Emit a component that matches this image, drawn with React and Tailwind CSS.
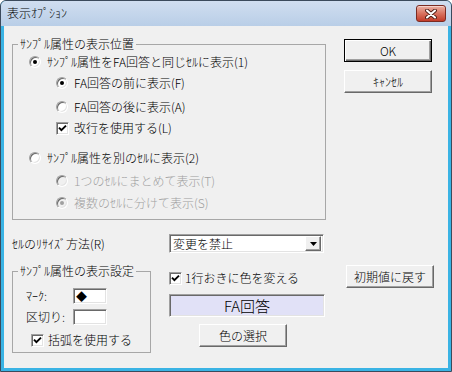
import React from 'react';

// classic sunken 3D edge (edit boxes, combo, check/radio)
const sunken =
  'border border-t-[#a0a0a0] border-l-[#a0a0a0] border-r-white border-b-white shadow-[inset_1px_1px_0_#696969,inset_-1px_-1px_0_#e3e3e3]';

const Radio = ({ checked, disabled }) => (
  <span
    className={`flex h-[12px] w-[12px] shrink-0 items-center justify-center rounded-full ${sunken} ${
      disabled ? 'bg-[#f0f0f0]' : 'bg-white'
    }`}
  >
    {checked && (
      <span className={`h-[4px] w-[4px] rounded-full ${disabled ? 'bg-[#a0a0a0]' : 'bg-black'}`} />
    )}
  </span>
);

const Check = ({ checked }) => (
  <span className={`flex h-[13px] w-[13px] shrink-0 items-center justify-center bg-white ${sunken}`}>
    {checked && (
      <svg width="9" height="9" viewBox="0 0 9 9">
        <path d="M1 3.6 L3.4 6.2 L8 1.6" fill="none" stroke="#000" strokeWidth="1.9" />
      </svg>
    )}
  </span>
);

const Btn = ({ children, def, className = '' }) => (
  <div
    className={`flex h-[23px] w-[88px] shrink-0 items-center justify-center bg-[#f0f0f0] leading-[16px] ${
      def
        ? 'border border-black shadow-[inset_1px_1px_0_#fff,inset_-1px_-1px_0_#696969,inset_-2px_-2px_0_#a0a0a0]'
        : 'border border-t-white border-l-white border-r-[#696969] border-b-[#696969] shadow-[inset_-1px_-1px_0_#a0a0a0]'
    } ${className}`}
  >
    {children}
  </div>
);

const Row = ({ className = '', children }) => (
  <div className={`flex h-[16px] items-center leading-[16px] ${className}`}>{children}</div>
);

const Legend = ({ children }) => (
  <span className="absolute left-[5px] top-[-9px] bg-[#f0f0f0] px-[2px] leading-[16px]">{children}</span>
);

const CloseBtn = () => (
  <div className="flex h-[17px] w-[30px] items-center justify-center rounded-[3px] border border-[#7b2b22] bg-linear-to-b from-[#eab0a4] via-[#d9725f] to-[#c23a28] shadow-[inset_0_1px_0_#f6d2ca]">
    <svg width="14" height="10" viewBox="0 0 14 10">
      <path d="M3 1.5 L11 8.5 M11 1.5 L3 8.5" stroke="#4a1a12" strokeWidth="3.8" strokeLinecap="round" />
      <path d="M3 1.5 L11 8.5 M11 1.5 L3 8.5" stroke="#fff" strokeWidth="2.1" strokeLinecap="round" />
    </svg>
  </div>
);

export default function App() {
  return (
    <div className="h-[372px] w-[452px] overflow-hidden font-['Noto_Sans_CJK_JP',sans-serif] text-[12px] font-light text-black">
      <div className="flex h-full w-full flex-col rounded-t-[6px] border border-[#3b4a5c] bg-[#3ab3e4]">
        {/* title bar */}
        <div className="flex h-[25px] shrink-0 items-start justify-between rounded-t-[5px] bg-linear-to-b from-[#d0def0] to-[#b9cee7] pl-[6px] pr-[5px] pt-[4px]">
          <span className="leading-[16px]">表示ｵﾌﾟｼｮﾝ</span>
          <CloseBtn />
        </div>

        {/* client */}
        <div className="mx-[3px] mb-[3px] flex-1 bg-[#f0f0f0] pl-[8px] pt-[18px]">
          <div className="flex items-start">
            <div className="relative h-[176px] w-[314px] shrink-0 border border-[#a7a7a7] pt-[9px]">
              <Legend>ｻﾝﾌﾟﾙ属性の表示位置</Legend>
              <Row className="gap-[6px] pl-[16px]">
                <Radio checked />
                <span>ｻﾝﾌﾟﾙ属性をFA回答と同じｾﾙに表示(1)</span>
              </Row>
              <Row className="mt-[5px] gap-[6px] pl-[43px]">
                <Radio checked />
                <span>FA回答の前に表示(F)</span>
              </Row>
              <Row className="mt-[8px] gap-[6px] pl-[43px]">
                <Radio />
                <span>FA回答の後に表示(A)</span>
              </Row>
              <Row className="mt-[5px] gap-[5px] pl-[43px]">
                <Check checked />
                <span>改行を使用する(L)</span>
              </Row>
              <Row className="mt-[14px] gap-[6px] pl-[16px]">
                <Radio />
                <span>ｻﾝﾌﾟﾙ属性を別のｾﾙに表示(2)</span>
              </Row>
              <Row className="mt-[7px] gap-[6px] pl-[43px] text-[#a0a0a0]">
                <Radio disabled />
                <span>1つのｾﾙにまとめて表示(T)</span>
              </Row>
              <Row className="mt-[6px] gap-[6px] pl-[43px] text-[#a0a0a0]">
                <Radio checked disabled />
                <span>複数のｾﾙに分けて表示(S)</span>
              </Row>
            </div>

            <div className="ml-[18px] mt-[-5px] flex flex-col gap-[8px]">
              <Btn def>OK</Btn>
              <Btn>ｷｬﾝｾﾙ</Btn>
            </div>
          </div>

          <div className="mt-[14px] flex h-[19px] items-center">
            <span className="w-[157px] shrink-0 leading-[16px]">ｾﾙのﾘｻｲｽﾞ方法(R)</span>
            <div className={`flex h-[19px] w-[155px] items-center justify-between bg-white p-[2px] ${sunken}`}>
              <span className="pl-[1px] leading-[15px]">変更を禁止</span>
              <div className="flex h-[15px] w-[16px] items-center justify-center border border-t-white border-l-white border-r-[#696969] border-b-[#696969] bg-[#f0f0f0] shadow-[inset_-1px_-1px_0_#a0a0a0]">
                <svg width="7" height="4" viewBox="0 0 7 4">
                  <path d="M0 0 H7 L3.5 4 Z" fill="#000" />
                </svg>
              </div>
            </div>
          </div>

          <div className="mt-[18px] flex items-start">
            <div className="relative h-[82px] w-[139px] shrink-0 border border-[#a7a7a7] pt-[16px]">
              <Legend>ｻﾝﾌﾟﾙ属性の表示設定</Legend>
              <Row className="pl-[13px]">
                <span className="w-[47px] shrink-0">ﾏｰｸ:</span>
                <div className={`flex h-[16px] w-[34px] items-center bg-white pl-[2px] ${sunken}`}>
                  <span className="text-[11px] leading-[14px]">◆</span>
                </div>
              </Row>
              <Row className="mt-[5px] pl-[13px]">
                <span className="w-[47px] shrink-0">区切り:</span>
                <div className={`h-[16px] w-[34px] bg-white ${sunken}`} />
              </Row>
              <Row className="mt-[7px] gap-[4px] pl-[18px]">
                <Check checked />
                <span>括弧を使用する</span>
              </Row>
            </div>

            <div className="ml-[18px] flex w-[156px] shrink-0 flex-col">
              <Row className="mt-[-1px] gap-[3px]">
                <Check checked />
                <span>1行おきに色を変える</span>
              </Row>
              <div
                className={`mt-[8px] flex h-[23px] w-[156px] items-center justify-center bg-[#e1e1f7] text-[15px] leading-[18px] ${sunken}`}
              >
                FA回答
              </div>
              <Btn className="ml-[30px] mt-[7px]">色の選択</Btn>
            </div>

            <Btn className="ml-[21px] mt-[-6px]">初期値に戻す</Btn>
          </div>
        </div>
      </div>
    </div>
  );
}
